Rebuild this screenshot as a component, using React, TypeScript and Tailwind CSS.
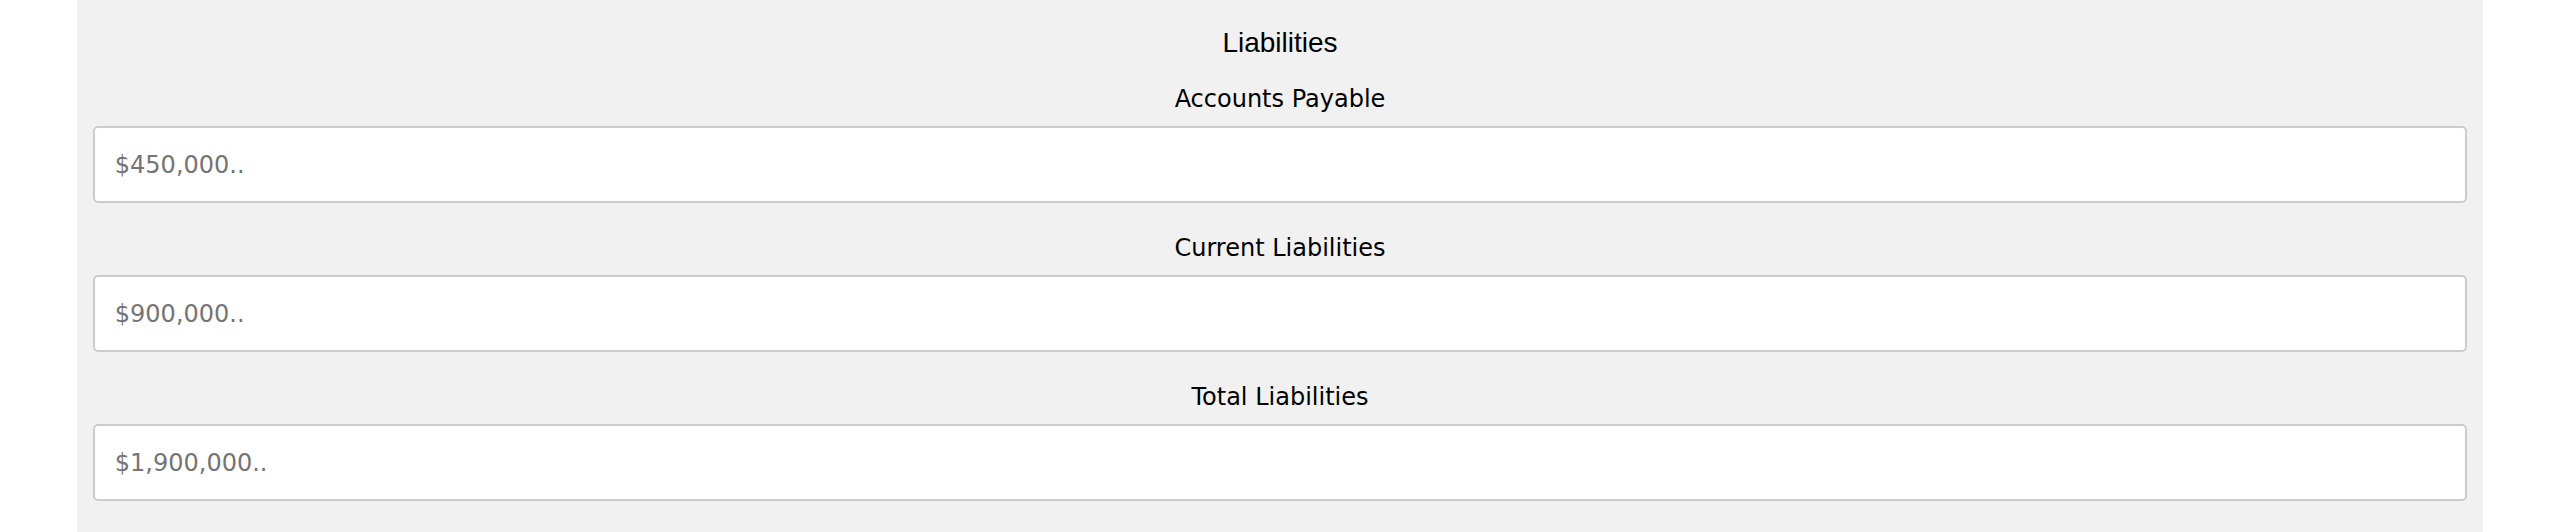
import React from "react";

const fields = [
  { label: "Accounts Payable", placeholder: "$450,000.." },
  { label: "Current Liabilities", placeholder: "$900,000.." },
  { label: "Total Liabilities", placeholder: "$1,900,000.." },
];

export default function App() {
  return (
    <div className="w-full h-[532px] bg-white overflow-hidden">
      <div className="w-[94%] mx-auto h-full bg-[#f1f1f1] px-4 pt-[27px]">
        <h2
          className="text-center text-[28px] leading-[32px] text-black mb-[26px]"
          style={{ fontFamily: '"Liberation Sans", Arial, sans-serif' }}
        >
          Liabilities
        </h2>
        {fields.map((f) => (
          <div key={f.label} className="flex flex-col mb-[31px]">
            <label
              className="text-center text-[24px] leading-[28px] text-black mb-[13px]"
              style={{ fontFamily: '"DejaVu Sans", Verdana, sans-serif' }}
            >
              {f.label}
            </label>
            <input
              type="text"
              placeholder={f.placeholder}
              className="w-full h-[77px] bg-white border-2 border-[#cccccc] rounded-[5px] px-5 text-[24px] text-black placeholder:text-[#757575] outline-none"
              style={{ fontFamily: '"DejaVu Sans", Verdana, sans-serif' }}
            />
          </div>
        ))}
      </div>
    </div>
  );
}
